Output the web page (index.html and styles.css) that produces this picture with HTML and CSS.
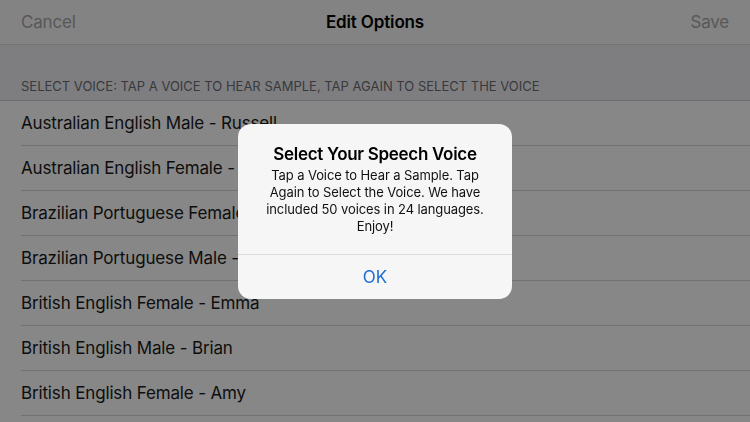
FILE: index.html
```html
<!DOCTYPE html>
<html>
<head>
<meta charset="utf-8">
<link rel="stylesheet" href="styles.css">
</head>
<body>
<div class="screen">
  <header class="nav">
    <span class="nav-btn">Cancel</span>
    <span class="nav-title">Edit Options</span>
    <span class="nav-btn nav-right">Save</span>
  </header>
  <div class="section-head">SELECT VOICE: TAP A VOICE TO HEAR SAMPLE, TAP AGAIN TO SELECT THE VOICE</div>
  <ul class="list">
    <li class="row">Australian English Male - Russell</li>
    <li class="row">Australian English Female - Karen</li>
    <li class="row">Brazilian Portuguese Female - Luciana</li>
    <li class="row">Brazilian Portuguese Male - Felipe</li>
    <li class="row">British English Female - Emma</li>
    <li class="row">British English Male - Brian</li>
    <li class="row">British English Female - Amy</li>
  </ul>
</div>
<div class="dim"></div>
<div class="alert">
  <div class="alert-body">
    <div class="alert-title">Select Your Speech Voice</div>
    <div class="alert-msg">Tap a Voice to Hear a Sample. Tap Again to Select the Voice. We have included 50 voices in 24 languages. Enjoy!</div>
  </div>
  <div class="alert-btn">OK</div>
</div>
</body>
</html>
```
FILE: styles.css
```css
html, body {
  margin: 0;
  padding: 0;
  width: 750px;
  height: 422px;
  overflow: hidden;
  font-family: "Inter", "Liberation Sans", sans-serif;
}
.screen {
  width: 750px;
  height: 422px;
  background: #ffffff;
}
.nav {
  height: 44px;
  background: #f8f8f8;
  border-bottom: 1px solid #d9d9d9;
  display: grid;
  grid-template-columns: 1fr auto 1fr;
  align-items: center;
  padding: 0 21px 0 21px;
}
.nav-btn {
  font-size: 17px;
  color: #a6a6a6;
  letter-spacing: -0.2px;
}
.nav-right {
  justify-self: end;
}
.nav-title {
  font-size: 17px;
  font-weight: 600;
  color: #000;
  letter-spacing: -0.15px;
}
.section-head {
  height: 56px;
  background: #efeff4;
  border-bottom: 1px solid #d0d0d0;
  box-sizing: border-box;
  display: flex;
  align-items: flex-end;
  padding: 0 21px 6px;
  font-size: 13px;
  color: #6d6d72;
  letter-spacing: 0;
}
.list {
  list-style: none;
  margin: 0;
  padding: 0 0 0 21px;
}
.row {
  height: 45px;
  box-sizing: border-box;
  border-bottom: 1px solid #d6d6d6;
  display: flex;
  align-items: center;
  font-size: 17px;
  color: #1a1a1a;
  letter-spacing: -0.15px;
}
.dim {
  position: fixed;
  inset: 0;
  background: rgba(0, 0, 0, 0.47);
}
.alert {
  position: fixed;
  left: 238px;
  top: 124px;
  width: 274px;
  background: #f6f6f6;
  border-radius: 13px;
  overflow: hidden;
}
.alert-body {
  padding: 19px 16px 19px;
  text-align: center;
  border-bottom: 1px solid #dcdcdc;
}
.alert-title {
  font-size: 17px;
  font-weight: 600;
  color: #000;
  letter-spacing: -0.3px;
  line-height: 22px;
  margin-bottom: 2px;
}
.alert-msg {
  font-size: 13px;
  line-height: 17px;
  color: #111;
  letter-spacing: -0.1px;
}
.alert-btn {
  height: 44px;
  display: flex;
  align-items: center;
  justify-content: center;
  font-size: 17px;
  color: #1f6fd6;
}
```
